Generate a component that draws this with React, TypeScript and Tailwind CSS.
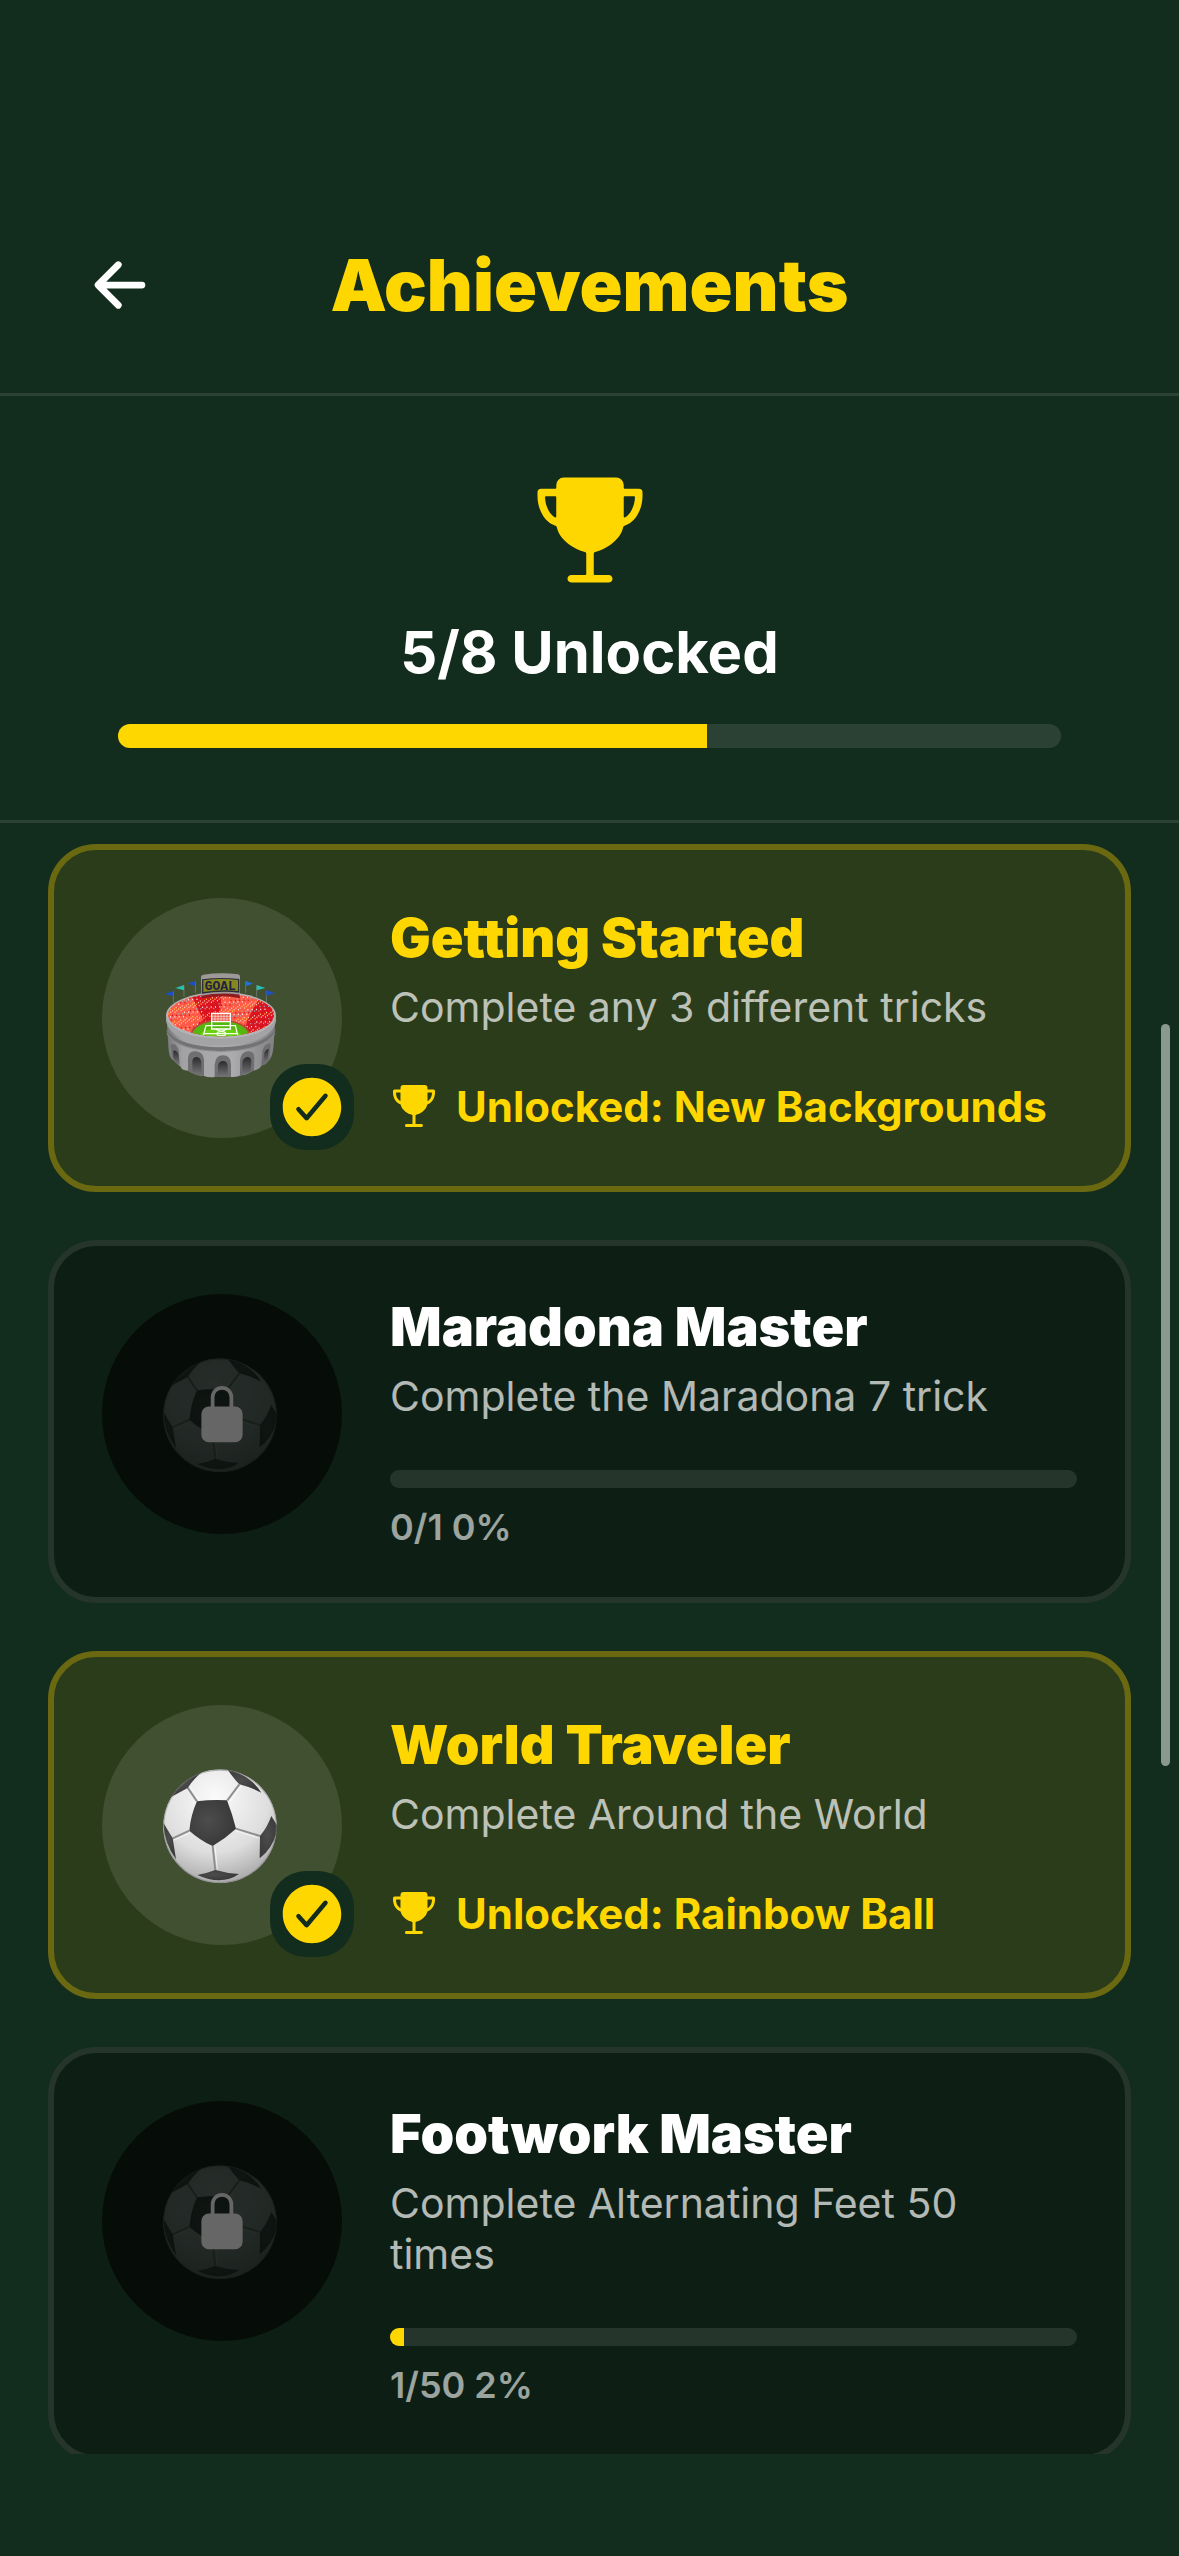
import React, { useId } from "react";
import { IoArrowBack, IoCheckmarkCircle, IoLockClosed, IoTrophy } from "react-icons/io5";

type Art = "stadium" | "ball";

interface Achievement {
  title: string;
  description: string;
  art: Art;
  reward?: string;
  done: number;
  goal: number;
}

const achievements: Achievement[] = [
  { title: "Getting Started", description: "Complete any 3 different tricks", art: "stadium", reward: "New Backgrounds", done: 3, goal: 3 },
  { title: "Maradona Master", description: "Complete the Maradona 7 trick", art: "ball", done: 0, goal: 1 },
  { title: "World Traveler", description: "Complete Around the World", art: "ball", reward: "Rainbow Ball", done: 1, goal: 1 },
  { title: "Footwork Master", description: "Complete Alternating Feet 50 times", art: "ball", done: 1, goal: 50 },
];

const crowdColors = ["#ffe3b0", "#ffffff", "#ffd23c", "#8fb8c8", "#ffc9b8", "#c81420"];

// Evenly scattered spectators, generated from a fixed sequence.
const crowd = Array.from({ length: 520 }, (_, i) => ({
  x: 50 + ((i * 0.61803399) % 1) * 326,
  y: 134 + ((i * 0.75487767) % 1) * 126,
  color: crowdColors[(i * 7) % crowdColors.length],
}));

function Stadium() {
  const id = useId();
  return (
    <svg viewBox="36 24 360 360" className="size-[120px]" role="img" aria-label="Stadium">
      <defs>
        <clipPath id={`${id}bowl`}>
          <ellipse cx="213" cy="195" rx="159" ry="64" />
        </clipPath>
        <linearGradient id={`${id}wall`} x1="0" x2="1">
          <stop offset="0" stopColor="#77777a" />
          <stop offset="0.15" stopColor="#a2a2a5" />
          <stop offset="0.6" stopColor="#acacaf" />
          <stop offset="1" stopColor="#808083" />
        </linearGradient>
        <linearGradient id={`${id}arch`} x1="0" x2="0" y1="0" y2="1">
          <stop offset="0" stopColor="#2c2c2e" />
          <stop offset="1" stopColor="#6d6d70" />
        </linearGradient>
      </defs>

      <g stroke="#7d8a86" strokeWidth="2">
        <path d="M70 124v34M102 106v34M136 94v34M287 94v34M320 106v34M349 122v34" />
      </g>
      <path d="M70 123v15l-25-6ZM136 93v15l-23-7Z" fill="#1b50c8" />
      <path d="M102 105v16l-26-7Z" fill="#25c0b0" />
      <path d="M287 93l23 8-23 7Z" fill="#1b72d8" />
      <path d="M320 105l26 9-26 7Z" fill="#25c0b0" />
      <path d="M349 121l26 8-26 8Z" fill="#1b50c8" />

      <path
        d="M49 195L56 302Q60 330 75 332Q82 345 92 350Q95 362 118 362Q135 376 162 378Q175 383 194 381L246 381Q262 382 272 376Q292 374 308 362Q328 360 335 346Q345 334 356 332Q368 322 371 285L377 195Z"
        fill={`url(#${id}wall)`}
      />
      <path d="M50 238Q85 291 213 292Q342 290 376 236V246Q345 302 213 304Q82 302 50 250Z" fill="#737376" />
      <path d="M51 252Q85 302 213 304Q342 302 375 250" fill="none" stroke="#8d8d90" strokeWidth="3" />

      <g fill="#6f6f72">
        <path d="M62 284q14-8 24 15l3 46q-18-5-24-27Z" />
        <path d="M114 364v-40q2-24 25-20 21 3 23 25v49q-28-2-48-14Z" />
        <path d="M194 381v-37q2-28 25-28t24 26v39Z" />
        <path d="M270 377v-45q2-24 22-28 20-3 21 18l-1 39q-18 12-42 16Z" />
        <path d="M334 347l3-44q8-24 26-22l-5 48q-8 16-24 18Z" />
      </g>
      <g fill={`url(#${id}arch)`}>
        <path d="M70 302q9-3 15 10l3 26q-14-3-18-18Z" />
        <path d="M127 364v-30q1-13 13-13 13 2 14 17v30q-13 4-27-4Z" />
        <path d="M204 376v-28q2-15 15-15t14 15v28Z" />
        <path d="M277 370v-32q1-14 14-17 13-1 13 14l-2 29q-10 6-25 6Z" />
        <path d="M341 334l2-26q6-11 13-11l-3 30q-4 8-12 7Z" />
      </g>

      <ellipse cx="213" cy="197" rx="165" ry="71" fill="#b4b4b7" />
      <path d="M48 197Q58 262 213 266Q368 262 378 197V214Q362 283 213 286Q64 283 48 214Z" fill="#a3a3a6" />
      <g clipPath={`url(#${id}bowl)`}>
        <rect x="48" y="120" width="330" height="150" fill="#ff5a47" />
        <path d="M120 128L215 128 208 215 124 240 160 210Z" fill="#db1420" />
        <path d="M325 150L380 160V270H280L292 210Z" fill="#db1420" />
        <path d="M50 200L84 260H50Z" fill="#db1420" />
        {crowd.map((p, i) => (
          <rect key={i} x={p.x} y={p.y} width="3" height="4" fill={p.color} />
        ))}
        <ellipse cx="211" cy="256" rx="90" ry="48" fill="#b9473b" />
        <ellipse cx="211" cy="260" rx="86" ry="48" fill="#55b70e" />
        <ellipse cx="211" cy="268" rx="70" ry="34" fill="#6bd012" />
        <g fill="none" stroke="#f3ffe8" strokeWidth="4">
          <path d="M158 264L168 227H256L265 264M162 251H264" />
          <ellipse cx="214" cy="251" rx="13" ry="6" />
          <path d="M198 237Q214 250 230 237" />
        </g>
      </g>
      <path d="M186 192H240V216H186Z" fill="#e95a4b" />
      <path d="M186 199H240M186 207H240M195 192V215M204 192V215M213 192V215M222 192V215M231 192V215" stroke="#ffe2dc" strokeWidth="2" />
      <path d="M185 237V190H241V237ZM185 215H241" fill="none" stroke="#fff" strokeWidth="4" />

      <path d="M158 128L268 128 270 145Q213 133 156 145Z" fill="#8c1b20" />
      <path d="M153 80Q154 75 160 74Q212 66 264 73Q270 74 270 79V134Q212 126 154 137Z" fill="#9d9998" />
      <path d="M156 88Q212 80 268 87V128Q212 122 156 131Z" fill="#2c2e3c" />
      <path d="M160 91Q212 83 264 90V123Q212 118 160 126Z" fill="#84881f" />
      <text x="211" y="119" textAnchor="middle" fontSize="39" fontWeight="700" fill="#22203f" className="font-['Liberation_Mono',monospace]">
        GOAL
      </text>
    </svg>
  );
}

function Ball() {
  const id = useId();
  return (
    <svg viewBox="66 75 360 360" className="size-[120px]" role="img" aria-label="Soccer ball">
      <defs>
        <radialGradient id={`${id}white`} cx="0.45" cy="0.25" r="0.8">
          <stop offset="0" stopColor="#fbfbfb" />
          <stop offset="0.6" stopColor="#dedede" />
          <stop offset="1" stopColor="#a2a2a2" />
        </radialGradient>
        <radialGradient id={`${id}dark`} cx="0.4" cy="0.45" r="0.7">
          <stop offset="0" stopColor="#4d4d4d" />
          <stop offset="1" stopColor="#353535" />
        </radialGradient>
        <clipPath id={`${id}edge`}>
          <circle cx="240" cy="259" r="171" />
        </clipPath>
      </defs>
      <g clipPath={`url(#${id}edge)`}>
        <circle cx="240" cy="259" r="171" fill={`url(#${id}white)`} />
        <g fill="none" stroke="#8f8f8f" strokeWidth="6" strokeLinejoin="round">
          <path d="M143 143L171 184M298 133L262 181M288 266L360 288M218 318L226 391M148 272L98 295" />
        </g>
        <g fill="none" stroke="#fff" strokeOpacity="0.7" strokeWidth="3">
          <path d="M150 140L177 180M304 137L270 183M288 273L356 294M225 320L232 388M150 279L102 300" />
        </g>
        <g fill={`url(#${id}dark)`}>
          <path d="M171 184Q216 178 261 181Q277 222 288 266Q254 297 218 318Q180 301 148 272Q152 225 171 184Z" />
          <path d="M183 98Q160 118 143 144L93 171Q118 120 183 92Z" />
          <path d="M262 88Q278 112 298 133Q333 142 364 158Q330 104 262 88Z" />
          <path d="M394 228Q382 262 360 288L359 355Q400 325 415 262Z" />
          <path d="M70 248L98 295 108 358Q72 310 70 248Z" />
          <path d="M172 405Q200 400 226 390Q260 400 297 402Q245 438 172 405Z" />
        </g>
        <circle cx="240" cy="259" r="169" fill="none" stroke="#777" strokeOpacity="0.5" strokeWidth="4" />
      </g>
    </svg>
  );
}

function ProgressBar({ value, label, className }: { value: number; label: string; className: string }) {
  return (
    <div
      role="progressbar"
      aria-label={label}
      aria-valuenow={value}
      aria-valuemin={0}
      aria-valuemax={100}
      className={`overflow-hidden rounded-full bg-white/10 ${className}`}
    >
      <div className="h-full bg-[#ffd700]" style={{ width: `${value}%` }} />
    </div>
  );
}

function AchievementCard({ item }: { item: Achievement }) {
  const unlocked = item.done >= item.goal;
  const percent = Math.round((item.done / item.goal) * 100);
  return (
    <li
      className={`flex shrink-0 gap-12 rounded-[48px] border-6 p-12 ${
        unlocked ? "border-[#6a6912] bg-[#2b3c1a]" : "border-[#25352b] bg-[#0d1f14]"
      }`}
    >
      <div
        className={`relative flex size-60 shrink-0 items-center justify-center rounded-full ${
          unlocked ? "bg-white/10" : "bg-[#060d09]"
        }`}
      >
        <div className={unlocked ? "" : "opacity-[0.13]"}>{item.art === "stadium" ? <Stadium /> : <Ball />}</div>
        {unlocked ? (
          <span className="absolute -right-3 -bottom-3 flex h-[86px] w-[84px] items-center justify-center rounded-[36px] bg-[#122c1d]">
            <IoCheckmarkCircle className="size-[72px] text-[#ffd700]" />
          </span>
        ) : (
          <span className="absolute inset-0 flex items-center justify-center">
            <IoLockClosed className="size-[60px] text-[#666666]" />
          </span>
        )}
      </div>
      <div className="flex min-w-0 flex-1 flex-col justify-center">
        <h2 className={`mb-3 text-[54px] leading-[65px] font-black ${unlocked ? "text-[#ffd700]" : "text-white"}`}>
          {item.title}
        </h2>
        <p className="mb-12 pr-6 text-[41px] leading-[51px] text-white/70">{item.description}</p>
        {unlocked ? (
          <p className="flex items-center gap-[18px] text-[42px] leading-[51px] font-bold text-[#ffd700]">
            <IoTrophy className="size-12 shrink-0" />
            <span>Unlocked: {item.reward}</span>
          </p>
        ) : (
          <>
            <ProgressBar value={percent} label={item.title} className="mb-[18px] h-[18px]" />
            <p className="text-[36px] leading-[43px] font-semibold text-white/60">
              {item.done}/{item.goal} {percent}%
            </p>
          </>
        )}
      </div>
    </li>
  );
}

export default function App() {
  return (
    <main className="flex h-screen flex-col bg-[#122c1d] pb-[102px] font-[Inter,'Liberation_Sans',sans-serif] text-white">
      <header className="grid shrink-0 grid-cols-[120px_1fr_120px] items-center border-b-3 border-white/10 px-[60px] pt-[225px] pb-12">
        <button type="button" aria-label="Back" className="flex size-[120px] items-center justify-center">
          <IoArrowBack className="size-[72px]" />
        </button>
        <h1 className="text-center text-[71px] leading-[86px] font-black text-[#ffd700]">Achievements</h1>
      </header>

      <section className="flex shrink-0 flex-col items-center border-b-3 border-white/10 py-[72px]">
        <div className="mb-6 flex h-[124px] items-center">
          <IoTrophy className="size-[120px] text-[#ffd700]" />
        </div>
        <p className="mb-9 text-[58px] leading-[72px] font-bold">5/8 Unlocked</p>
        <ProgressBar value={62.5} label="Achievements unlocked" className="h-6 w-4/5" />
      </section>

      <section className="relative min-h-0 flex-1 overflow-hidden">
        <ul className="flex flex-col gap-12 px-12 pt-[21px]">
          {achievements.map((item) => (
            <AchievementCard key={item.title} item={item} />
          ))}
        </ul>
        <div className="absolute top-[201px] right-[9px] h-[742px] w-[9px] rounded-full bg-[#8a998f]" />
      </section>
    </main>
  );
}
